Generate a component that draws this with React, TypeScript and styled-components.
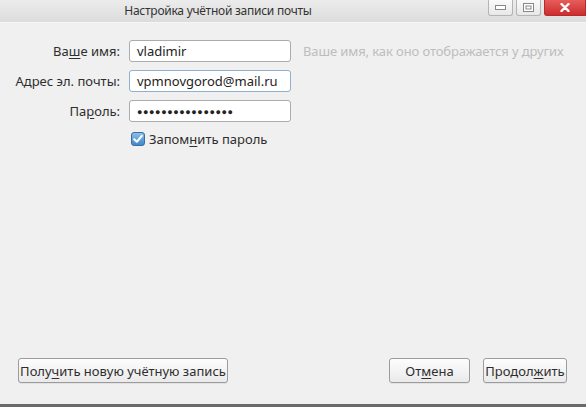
import React from "react";
import styled, { createGlobalStyle } from "styled-components";

const Global = createGlobalStyle`
  html, body { margin: 0; padding: 0; background: #f0f0f0; }
  body { font-family: "Noto Sans", "Open Sans", "DejaVu Sans", sans-serif; }
`;

const Window = styled.div`
  width: 586px;
  height: 407px;
  display: flex;
  flex-direction: column;
  background: #f0f0f0;
  box-sizing: border-box;
  border-bottom: 3px solid #6a6a6a;
  font-family: "Noto Sans", "Open Sans", sans-serif;
  color: #2e2e2e;
`;

const TitleBar = styled.div`
  height: 22px;
  flex: none;
  display: flex;
  align-items: flex-start;
  background: linear-gradient(#ececec, #dcdcdc);
  border-bottom: 1px solid #f6f6f6;
`;

const Title = styled.div`
  width: 436px;
  text-align: center;
  font-size: 12px;
  letter-spacing: -0.25px;
  line-height: 22px;
  color: #333;
`;

const Controls = styled.div`
  margin-left: auto;
  display: flex;
  gap: 3px;
  align-items: flex-start;
`;

const CtrlButton = styled.div<{ $close?: boolean }>`
  width: ${(p) => (p.$close ? "42px" : "25px")};
  height: 16px;
  box-sizing: border-box;
  border: 1px solid ${(p) => (p.$close ? "#b52a2a" : "#b4b4b4")};
  border-top: none;
  border-radius: ${(p) => (p.$close ? "0 0 0 3px" : "0 0 3px 3px")};
  background: ${(p) =>
    p.$close ? "linear-gradient(#e85c5c, #cc2d2d)" : "linear-gradient(#fafafa, #e8e8e8)"};
  display: flex;
  align-items: center;
  justify-content: center;
`;

const Body = styled.div`
  flex: 1;
  display: flex;
  flex-direction: column;
  padding: 17px 19px 21px 0;
`;

const Form = styled.div`
  display: grid;
  grid-template-columns: 120px 162px auto;
  column-gap: 9px;
  row-gap: 8px;
  align-items: center;
`;

const Label = styled.label`
  text-align: right;
  font-size: 13px;
  color: #2e2e2e;
`;

const U = styled.span`
  text-decoration: underline;
  text-underline-offset: 2px;
`;

const Input = styled.div<{ $focus?: boolean }>`
  height: 22px;
  box-sizing: border-box;
  border: 1px solid ${(p) => (p.$focus ? "#8fb0cf" : "#acacac")};
  border-radius: 3px;
  background: #fff;
  padding: 0 7px;
  font-size: 13px;
  line-height: 20px;
  color: #222;
  white-space: nowrap;
  overflow: hidden;
`;

const Dots = styled.span`
  font-size: 9px;
  letter-spacing: 0.6px;
  position: relative;
  top: -1px;
`;

const Hint = styled.div`
  margin-left: 3px;
  font-size: 13px;
  letter-spacing: -0.1px;
  color: #bdbdbd;
  white-space: nowrap;
`;

const CheckRow = styled.div`
  grid-column: 2 / 4;
  display: flex;
  align-items: center;
  gap: 4px;
  padding-left: 2px;
  font-size: 13px;
  color: #2e2e2e;
`;

const Spacer = styled.div`
  flex: 1;
`;

const Footer = styled.div`
  display: flex;
  align-items: center;
  padding-left: 18px;
`;

const Button = styled.button<{ $w: number }>`
  width: ${(p) => p.$w}px;
  height: 25px;
  box-sizing: border-box;
  border: 1px solid #9c9c9c;
  border-radius: 3px;
  background: linear-gradient(#fdfdfd, #eaeaea);
  font-family: inherit;
  font-size: 13px;
  color: #2e2e2e;
  padding: 0;
  box-shadow: 0 1px 0 rgba(0, 0, 0, 0.06);
`;

const RightButtons = styled.div`
  margin-left: auto;
  display: flex;
  gap: 13px;
`;

export default function App() {
  return (
    <>
      <Global />
      <Window>
        <TitleBar>
          <Title>Настройка учётной записи почты</Title>
          <Controls>
            <CtrlButton>
              <svg width="11" height="5" viewBox="0 0 11 5">
                <rect x="0.5" y="0.5" width="10" height="4" fill="#fff" stroke="#888" />
              </svg>
            </CtrlButton>
            <CtrlButton>
              <svg width="11" height="9" viewBox="0 0 11 9">
                <rect x="0.5" y="0.5" width="10" height="8" fill="#fff" stroke="#888" />
                <rect x="3" y="3" width="5" height="3" fill="none" stroke="#888" />
              </svg>
            </CtrlButton>
            <CtrlButton $close>
              <svg width="10" height="9" viewBox="0 0 10 9">
                <path d="M1.5 1 L8.5 8 M8.5 1 L1.5 8" stroke="#fff" strokeWidth="2.4" strokeLinecap="round" />
              </svg>
            </CtrlButton>
          </Controls>
        </TitleBar>
        <Body>
          <Form>
            <Label>
              Ва<U>ш</U>е имя:
            </Label>
            <Input>vladimir</Input>
            <Hint>Ваше имя, как оно отображается у других</Hint>

            <Label>Адрес эл. почты:</Label>
            <Input $focus>vpmnovgorod@mail.ru</Input>
            <div />

            <Label>
              Па<U>р</U>оль:
            </Label>
            <Input>
              <Dots>●●●●●●●●●●●●●●●●</Dots>
            </Input>
            <div />

            <div />
            <CheckRow>
              <svg width="14" height="14" viewBox="0 0 14 14">
                <defs>
                  <linearGradient id="cb" x1="0" y1="0" x2="0" y2="1">
                    <stop offset="0" stopColor="#8fc0ea" />
                    <stop offset="1" stopColor="#3f86c9" />
                  </linearGradient>
                </defs>
                <rect x="0.5" y="0.5" width="13" height="13" rx="2.5" fill="url(#cb)" stroke="#3a6fa3" />
                <path d="M3.2 7.2 L5.8 9.8 L10.8 3.8" fill="none" stroke="#fff" strokeWidth="2" strokeLinecap="round" strokeLinejoin="round" />
              </svg>
              <span>
                Запом<U>н</U>ить пароль
              </span>
            </CheckRow>
          </Form>
          <Spacer />
          <Footer>
            <Button $w={210}>
              Полу<U>ч</U>ить новую учётную запись
            </Button>
            <RightButtons>
              <Button $w={81}>
                От<U>м</U>ена
              </Button>
              <Button $w={84}>
                Продол<U>ж</U>ить
              </Button>
            </RightButtons>
          </Footer>
        </Body>
      </Window>
    </>
  );
}
